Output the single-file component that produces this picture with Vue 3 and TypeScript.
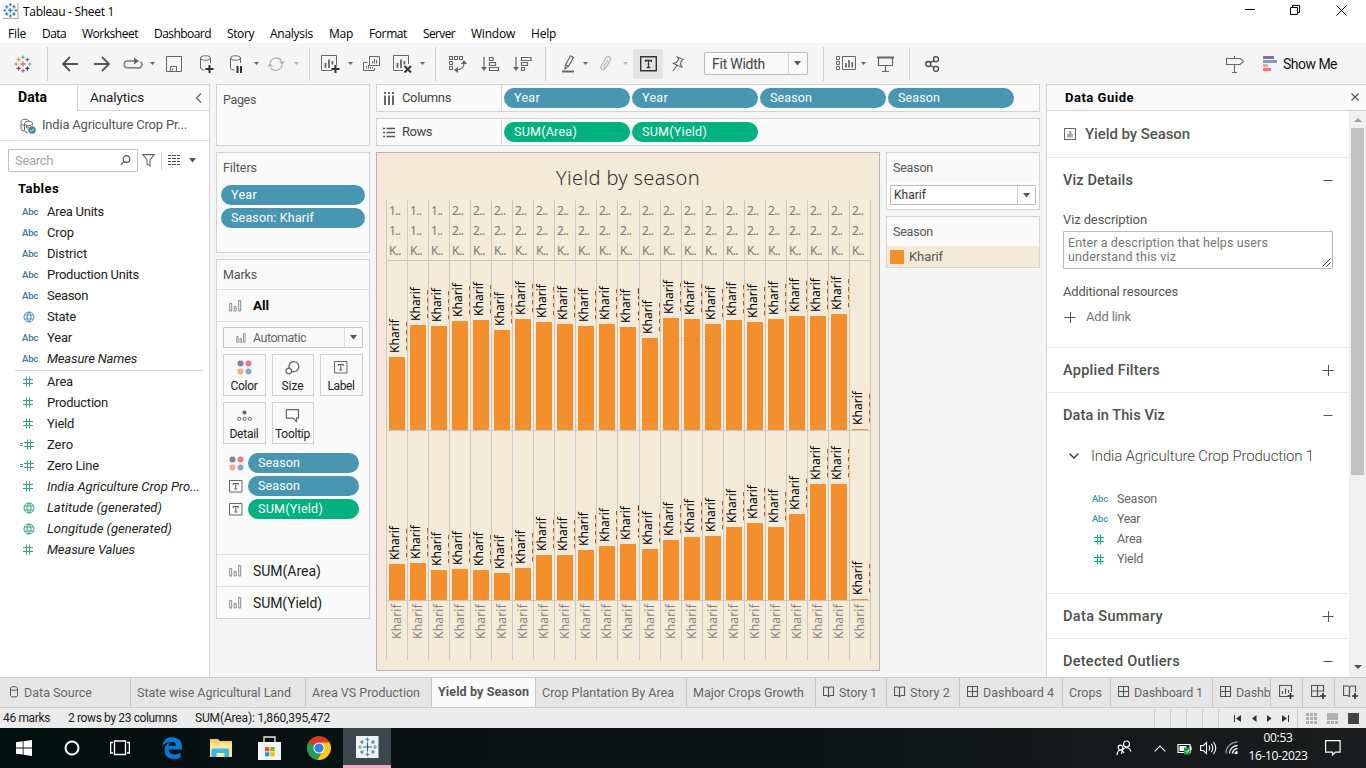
<script setup lang="ts">
import { h, type FunctionalComponent } from 'vue'

// Stretches or tightens a label's letter spacing so that it takes the given length.
const vFit = {
  mounted(el: HTMLElement, binding: { value: number }) {
    const range = document.createRange()
    range.selectNodeContents(el)
    const box = range.getBoundingClientRect()
    const length = Math.max(box.width, box.height)
    const count = (el.textContent || '').trim().length
    if (count) el.style.letterSpacing = ((binding.value - length) / count).toFixed(3) + 'px'
  },
}

interface Shape { d: string; f?: string; s?: string; w?: number; o?: number }
interface Glyph { w: number; h: number; c?: string; p: Shape[] }

const circle = (x: number, y: number, r: number) =>
  `M${x - r} ${y}a${r} ${r} 0 1 0 ${2 * r} 0a${r} ${r} 0 1 0 ${-2 * r} 0`
const plus = (x: number, y: number, r: number) => `M${x - r} ${y}h${2 * r}M${x} ${y - r}v${2 * r}`
const G = '#666'

const logo = (c: string[], k: number): Shape[] => [
  { d: plus(9 * k, 9 * k, 2.6 * k), s: c[0], w: 1.3 },
  { d: plus(9 * k, 2.2 * k, 1.8 * k), s: c[1], w: 1 },
  { d: plus(9 * k, 15.8 * k, 1.8 * k), s: c[2], w: 1 },
  { d: plus(2.2 * k, 9 * k, 1.6 * k), s: c[3], w: 1 },
  { d: plus(15.8 * k, 9 * k, 1.6 * k), s: c[4], w: 1 },
  { d: plus(4.6 * k, 4.6 * k, 2 * k), s: c[5], w: 1.2 },
  { d: plus(13.4 * k, 4.6 * k, 2 * k), s: c[6], w: 1.2 },
  { d: plus(4.6 * k, 13.4 * k, 2 * k), s: c[7], w: 1.2 },
  { d: plus(13.4 * k, 13.4 * k, 2 * k), s: c[8], w: 1.2 },
]
const blue = Array(9).fill('#3a7ca8')
const globe = (c: string): Glyph => ({
  w: 12, h: 12, p: [{ d: circle(6, 6, 5) + 'M1.500 4h9M1.500 8h9M6 1Q2 6 6 11Q10 6 6 1', s: c, w: 1 }],
})

const glyphs: Record<string, Glyph> = {
  logo: { w: 18, h: 18, p: logo(['#e8762c', '#7099a6', '#5c6692', '#7099a6', '#7099a6', '#eb912c', '#59879b', '#c72035', '#1f447e'], 1) },
  appLogo: { w: 16, h: 16, p: [{ d: 'M0 0h15.5v15.5h-15.5z', f: '#f7f7f7' }, { d: 'M15 0v15.5M0 15.5h15.5', s: '#aaa' }, ...logo(blue, 0.82)] },
  left: { w: 18, h: 16, p: [{ d: 'M2 8h15M9 1L2 8l7 7', s: '#555', w: 1.8 }] },
  right: { w: 18, h: 16, p: [{ d: 'M1 8h15M9 1l7 7l-7 7', s: '#555', w: 1.8 }] },
  redo: { w: 20, h: 14, p: [{ d: 'M11 4H4.500a3.400 3.400 0 0 0 0 6.800H14a3.500 3.500 0 0 0 3.500-6', s: '#777', w: 1.4 }, { d: 'M11 0.500l5 3.500l-5 3.500z', f: '#666' }] },
  caret: { w: 5, h: 3, p: [{ d: 'M0 0h5l-2.500 3z', f: '#666' }] },
  caretPale: { w: 5, h: 3, p: [{ d: 'M0 0h5l-2.500 3z', f: '#b5b5b5' }] },
  caretBig: { w: 8, h: 5, p: [{ d: 'M0 0h7l-3.500 4.500z', f: '#555' }] },
  save: { w: 16, h: 16, p: [{ d: 'M.5.5h15v15h-15zM4.500 15v-4.500h6V15M6.500 12.500v2', s: G }] },
  dbPlus: { w: 16, h: 18, p: [{ d: 'M1.500 3v10c0 1 2 2 4 2M11.500 3v5M1.500 3c0-3 10-3 10 0s-10 3-10 0', s: G }, { d: 'M10.500 10v8M6.500 14h8', s: '#333', w: 2 }] },
  dbPause: { w: 16, h: 18, p: [{ d: 'M1.500 3v10c0 1 2 2 4 2M11.500 3v5M1.500 3c0-3 10-3 10 0s-10 3-10 0', s: G }, { d: 'M8.500 11v7M12 11v7', s: '#333', w: 2 }] },
  refresh: { w: 18, h: 16, p: [{ d: 'M3 7a6.300 6.300 0 0 1 11.500-2M15 9a6.300 6.300 0 0 1-11.500 2.500', s: '#b5b5b5', w: 1.3 }, { d: 'M12 5.500h6l-3 3.500zM0 10.500h6l-3-3.500z', f: '#b5b5b5' }] },
  chartPlus: { w: 20, h: 18, p: [{ d: 'M11 15.500H.5V.5h15V10', s: G }, { d: 'M4.500 8v5M8 4.500v8.500M11.500 6v3.500', s: G, w: 1.8 }, { d: 'M14.500 10v8M10.500 14h8', s: '#333', w: 2 }] },
  chartX: { w: 20, h: 18, p: [{ d: 'M10 15.500H.5V.5h15V9', s: G }, { d: 'M4.500 8v5M8 4.500v8.500M11.500 6v3.500', s: G, w: 1.8 }, { d: 'M11.500 11l6.500 6.500M18 11l-6.500 6.500', s: '#333', w: 2 }] },
  dup: { w: 18, h: 16, p: [{ d: 'M6.500.5h10v9h-10zM4.500 6.500h-4v8h11V12M9.500 5v2.500M11.500 3v4.500M13.500 4v3.500M3.500 10v2.500M5.500 9v3.500M7.500 11v1.500M9.500 11v1.500', s: G }] },
  swap: { w: 18, h: 18, p: [{ d: 'M.5 1.500h3v3h-3zM5.500 1.500h3v3h-3zM10.500 1.500h3v3h-3zM.5 6.500h3v3h-3zM.5 11.500h3v3h-3zM15 8q0 6.500-7 7', s: G, w: 1.1 }, { d: 'M15 5l3 4h-6zM5 15l4-3v6z', f: G }] },
  sortAsc: { w: 19, h: 16, p: [{ d: 'M3 1v12M8.500 1.500h3.500v3h-3.500zM8.500 6.500h6v3h-6zM8.500 11.500h9v3h-9z', s: G, w: 1.2 }, { d: 'M0 11h6l-3 4z', f: G }] },
  sortDesc: { w: 19, h: 16, p: [{ d: 'M3 1v12M8.500 1.500h9.500v3h-9.500zM8.500 6.500h6v3h-6zM8.500 11.500h3v3h-3z', s: G, w: 1.2 }, { d: 'M0 11h6l-3 4z', f: G }] },
  pen: { w: 14, h: 18, p: [{ d: 'M8.500.8l3 1.600l-5 9l-3.500 2.600l.5-4.200zM3.500 9.800l3 1.600', s: G, w: 1.2 }, { d: 'M0 16.500h12', s: G, w: 2 }] },
  clip: { w: 14, h: 16, p: [{ d: 'M11 5L6.500 12.500q-1.500 2-3.500 1q-2-1.500-.8-3.500L7 2q1.500-2 3.500-1q1.800 1.200.8 3.300L7 11.500q-1 1.200-1.800.6t-.2-1.800L9 4', s: '#b5b5b5', w: 1.2 }] },
  text: { w: 17, h: 16, p: [{ d: 'M.7.7h15.600v14.100H.7z', s: '#333', w: 1.4 }, { d: 'M5.500 6V4.500h6V6M8.500 4.500v7M6.800 11.500h3.400', s: '#333', w: 1.3 }] },
  textSm: { w: 14, h: 13, p: [{ d: 'M.5.5h12.500v11.500H.5z', s: G }, { d: 'M4.300 5V3.500h5V5M6.800 3.500v5.500M5.300 9h3', s: G, w: 1.1 }] },
  pin: { w: 14, h: 16, p: [{ d: 'M6.500 1l5.500 2.500l-1.500.9l-1 3.500l1.500 3.300L2.500 7.500l3-1.200l2.200-3.200zM6 9.500L2 15', s: G, w: 1.2 }] },
  cards: { w: 20, h: 16, p: [{ d: 'M.5.5h3v3h-3zM.5 5.500h3v3h-3zM.5 10.500h3v3h-3zM6.500.5h13v13h-13z', s: G }, { d: 'M10 7v4.500M13 4v7.500M16.300 6v5.500', s: G, w: 1.7 }] },
  present: { w: 18, h: 16, p: [{ d: 'M0 1.500h17', s: G, w: 2 }, { d: 'M1.500 2v7.500h14V2M8.500 10v5M5 15.500h7', s: G, w: 1.2 }] },
  share: { w: 15, h: 16, p: [{ d: circle(3.2, 8, 2.5) + circle(11, 3.2, 2.5) + circle(11, 12.8, 2.5) + 'M5.400 6.700L8.800 4.600M5.400 9.300l3.400 2.100', s: '#444', w: 1.3 }] },
  sign: { w: 19, h: 18, p: [{ d: 'M.5 3.500h13.500l3.500 3l-3.500 3H.5zM8.500 1v2.500M8.500 10v7M6 17.500h5', s: G, w: 1.1 }] },
  showMe: { w: 15, h: 15, p: [{ d: 'M0 0h11v3H0z', f: '#8a6d9b' }, { d: 'M0 4h14v3H0z', f: '#7ba0cc' }, { d: 'M0 8h5v3H0z', f: '#f5a97f' }, { d: 'M0 12h8v3H0z', f: '#fb6f7f' }] },
  source: { w: 17, h: 16, p: [{ d: 'M1 3.500v7q0 2 3 2.500M1 3.500c0-3 8-3 8 0M4.500 5.500c0-3 8-3 8 0s-8 2.500-8 0v7q0 1.500 3 2M12.500 5.500v2M1.500 6.500l3 1M9 9H6l1.500-1.500M6 9l1.500 1.500', s: G, w: 1 }, { d: circle(12, 12, 3.7), f: '#3a87a5' }, { d: 'M10.200 12l1.300 1.300l2.300-2.500', s: '#fff', w: 1 }] },
  search: { w: 11, h: 11, p: [{ d: circle(6.5, 4, 3.3) + 'M4.200 6.400L.8 9.800', s: '#555', w: 1.2 }] },
  funnel: { w: 14, h: 13, p: [{ d: 'M.8.6h11.400L8 6v6L5 10V6z', s: G, w: 1.1 }] },
  grid: { w: 13, h: 11, p: [{ d: 'M0 .5h12M0 3.500h12M0 6.500h12M0 9.500h12', s: '#444', w: 1 }, { d: 'M3.500 0v11M8.500 0v11', s: '#fff', w: .8 }] },
  chevL: { w: 7, h: 10, p: [{ d: 'M6 .5L1.500 5L6 9.500', s: G, w: 1.3 }] },
  chevD: { w: 10, h: 6, p: [{ d: 'M.5.5L5 5L9.500.5', s: '#333', w: 1.3 }] },
  colIcon: { w: 12, h: 13, p: [{ d: 'M2 0v2M6 0v2M10 0v2M2 3.500v9.500M6 3.500v9.500M10 3.500v9.500', s: G, w: 2 }] },
  rowIcon: { w: 12, h: 11, p: [{ d: 'M0 1.500h2M0 5.500h2M0 9.500h2M3.500 1.500h8.500M3.500 5.500h8.500M3.500 9.500h8.500', s: '#555', w: 1.5 }] },
  hash: { w: 11, h: 11, p: [{ d: 'M0 3.500h10M0 7.500h10M3.500.5v10M6.500.5v10', s: '#3aa183', w: 1 }] },
  hashVivid: { w: 11, h: 11, p: [{ d: 'M0 3.500h10M0 7.500h10M3.500.5v10M6.500.5v10', s: '#00b180', w: 1.2 }] },
  eqHash: { w: 14, h: 11, p: [{ d: 'M4 3.500h10M4 7.500h10M7.500.5v10M10.500.5v10M0 4.500h3M0 6.500h3', s: '#3aa183', w: 1 }] },
  globe: globe('#4996b2'),
  globeGreen: globe('#3aa183'),
  bars: { w: 13, h: 12, p: [{ d: 'M.7 3.500h2v7.500h-2zM5.200 6.500h2v4.500h-2zM9.700.5h2v10.500h-2z', s: '#8a8a8a', w: 1 }] },
  barsSm: { w: 10, h: 10, p: [{ d: 'M.7 3.500h1.500v6h-1.500zM4 5.500h1.500v4h-1.500zM7.500.5h1.500v9h-1.500z', s: '#999', w: 1 }] },
  dots: { w: 15, h: 15, p: [{ d: circle(3.5, 3.5, 3), f: '#8a7a9e' }, { d: circle(11.5, 3.5, 3), f: '#fb7480' }, { d: circle(3.5, 11.5, 3), f: '#f4ab80' }, { d: circle(11.5, 11.5, 3), f: '#86a7d0' }] },
  size: { w: 15, h: 15, p: [{ d: 'M4.200 8.500A5 5 0 1 1 7 11.300', s: G, w: 1.3 }, { d: circle(3.8, 11, 2.9), s: G, w: 1.3 }] },
  detail: { w: 15, h: 12, p: [{ d: circle(7.5, 2.5, 2.1), f: G }, { d: circle(2.2, 8.8, 1.6) + circle(7.5, 8.8, 1.6) + circle(12.8, 8.8, 1.6), s: G, w: 1 }] },
  bubble: { w: 15, h: 14, p: [{ d: 'M1.500.6h12v8.500h-2v3.300L8 9.100H1.500q-.5-4 0-8.500', s: G, w: 1.2 }] },
  vizBox: { w: 12, h: 12, p: [{ d: 'M.5.5h11v11H.5z', s: G, w: 1.1 }, { d: 'M3 6h2V3h2.500v3H9v3.500H3z', f: '#aaa' }] },
  minus: { w: 12, h: 12, p: [{ d: 'M1.500 6.500h9', s: '#555', w: 1 }] },
  plus: { w: 12, h: 12, p: [{ d: 'M.5 6.500h11M6.500 1v11', s: '#555', w: 1 }] },
  close: { w: 8, h: 8, p: [{ d: 'M.5.5l7 7M7.500.5l-7 7', s: '#555', w: 1.2 }] },
  grip: { w: 9, h: 9, p: [{ d: 'M.5 8.500l8-8M4.500 8.500l4-4', s: '#444', w: 1 }] },
  cyl: { w: 10, h: 12, p: [{ d: 'M1.500 2.500v7q0 1.500 3.500 1.500t3.500-1.500v-7c0-2.500-7-2.500-7 0s7 2.300 7 0', s: '#555', w: 1 }] },
  book: { w: 12, h: 12, p: [{ d: 'M.5 1h3q2 0 2 1.500V11q-.5-1.500-2-1.500H.5zM10.500 1h-3q-2 0-2 1.500V11q.5-1.500 2-1.500h3z', s: '#555', w: 1.1 }] },
  dash: { w: 12, h: 12, p: [{ d: 'M.5.5h10v10H.5zM5.500.5v10M.5 5.500h10', s: '#555', w: 1.1 }] },
  newSheet: { w: 16, h: 15, p: [{ d: 'M9 11.500H.5V.5h12V7M3.500 6v3M6.500 3.500v5.500M9.500 5v3', s: '#555', w: 1.2 }, { d: 'M11.500 8v6M8.500 11h6', s: '#333', w: 1.6 }] },
  newDash: { w: 16, h: 15, p: [{ d: 'M9 11.500H.5V.5h12V7M6.500.5v11M.5 6h12', s: '#555', w: 1.2 }, { d: 'M12 8v6M9 11h6', s: '#333', w: 1.6 }] },
  newStory: { w: 16, h: 15, p: [{ d: 'M.5 1h4q2 0 2 1.500V12q-.5-1.500-2-1.500h-4zM12.500 7V1h-4q-2 0-2 1.500V12', s: '#555', w: 1.2 }, { d: 'M12 8v6M9 11h6', s: '#333', w: 1.6 }] },
  first: { w: 8, h: 7, p: [{ d: 'M.5 0v7', s: '#333', w: 1 }, { d: 'M7 0v7L2 3.500z', f: '#333' }] },
  prev: { w: 5, h: 7, p: [{ d: 'M4.500 0v7L0 3.500z', f: '#333' }] },
  next: { w: 5, h: 7, p: [{ d: 'M0 0v7l4.500-3.500z', f: '#333' }] },
  last: { w: 8, h: 7, p: [{ d: 'M6.500 0v7', s: '#333', w: 1 }, { d: 'M0 0v7l5-3.500z', f: '#333' }] },
  sheetGrid: { w: 12, h: 11, p: [{ d: 'M0 0h3v3H0zM4 0h3v3H4zM8 0h3v3H8zM0 4h3v3H0zM4 4h3v3H4zM8 4h3v3H8zM0 8h3v3H0zM4 8h3v3H4zM8 8h3v3H8z', f: '#b0b0b0' }] },
  film: { w: 12, h: 11, p: [{ d: 'M0 0h11v7H0zM0 8h3v3H0zM4 8h3v3H4zM8 8h3v3H8z', f: '#b0b0b0' }] },
  tabsView: { w: 12, h: 11, p: [{ d: 'M0 0h11v11H0z', f: '#444' }] },
  min: { w: 11, h: 11, p: [{ d: 'M0 5.500h10', s: '#000', w: 1 }] },
  restore: { w: 11, h: 11, p: [{ d: 'M.5 2.500h7v7h-7zM2.500 2.500v-2h7v7h-2', s: '#000', w: 1 }] },
  quit: { w: 11, h: 11, p: [{ d: 'M.5.5l10 10M10.500.5l-10 10', s: '#000', w: 1 }] },
  win: { w: 16, h: 16, p: [{ d: 'M0 2.300l6.700-1v6.200H0zM7.500 1.200L16 0v7.500H7.500zM0 8.400h6.700v6.200L0 13.700zM7.500 8.400H16V16l-8.500-1.200z', f: '#fff' }] },
  cortana: { w: 16, h: 16, p: [{ d: circle(8, 8, 6.5), s: '#fff', w: 2 }] },
  taskView: { w: 20, h: 16, p: [{ d: 'M4.500 1h11v13.500h-11zM3 2.500H.6v10.500H3M17 2.500h2.400v10.500H17', s: '#fff', w: 1.3 }] },
  edge: { w: 20, h: 22, p: [{ d: 'M0 9.500Q1.500 0 10.500 0Q20 .8 20 10v2.500H6.500q.5 5 6.500 5q3 0 5.500-1.700v4.700Q15.500 22 11.500 22Q2.500 21.500 2.500 13q.2-5.500 5.500-8Q2.500 5.500 0 9.500M6.700 8.700h7q0-4-3.300-4T6.700 8.700', f: '#0078d7' }] },
  folder: { w: 22, h: 19, p: [{ d: 'M0 0h8l2 2h12v16H0z', f: '#f5cf5f' }, { d: 'M0 4h22v14H0z', f: '#fde596' }, { d: 'M1.500 18V11q0-1.500 1.500-1.500h14.500q1.500 0 1.500 1.500v7h-4.500v-4h-8v4z', f: '#38b6ea' }] },
  store: { w: 24, h: 24, p: [{ d: 'M6 7V1h11v6', s: '#e8e8e8', w: 1.4 }, { d: 'M0 6h23v18H0z', f: '#f3f3f3' }, { d: 'M7 11h4.300v4.300H7z', f: '#f25022' }, { d: 'M12.300 11h4.300v4.300h-4.300z', f: '#7fba00' }, { d: 'M7 16.300h4.300v4H7z', f: '#00a4ef' }, { d: 'M12.300 16.300h4.300v4h-4.300z', f: '#ffb900' }] },
  chrome: { w: 24, h: 24, p: [{ d: circle(12, 12, 12), f: '#de3a2b' }, { d: 'M1.500 6.200A12 12 0 0 0 10.500 23.900L15.500 15.500L12 12z', f: '#1da05a' }, { d: 'M22.600 6.600A12 12 0 0 1 10.500 23.900L17.400 12L14 6.600z', f: '#fbcb1b' }, { d: circle(12, 12, 5.6), f: '#fff' }, { d: circle(12, 12, 4.6), f: '#3b7ded' }] },
  taskLogo: { w: 23, h: 22, p: [{ d: 'M0 0h22.500v22H0z', f: '#eef3f6' }, ...[['M11.500 6.500v9M7 11h9', '#24668f'], [plus(11.5, 3.5, 2), '#4a86a8'], [plus(11.5, 18.5, 2), '#4a86a8'], [plus(4, 11, 2), '#6c9bb8'], [plus(19, 11, 2), '#6c9bb8'], [plus(6, 6, 2), '#4a86a8'], [plus(17, 6, 2), '#4a86a8'], [plus(6, 16, 2), '#4a86a8'], [plus(17, 16, 2), '#4a86a8']].map(([d, s]) => ({ d, s, w: 1.2 }))] },
  people: { w: 16, h: 16, p: [{ d: circle(10.5, 4, 3) + 'M5.500 14q.5-6 5-6.500q3.500.5 4.500 4' + circle(4.5, 7.5, 2.3) + 'M1 15q.3-4.500 3.500-5q2.500.3 3.500 3', s: '#fff', w: 1.2 }] },
  up: { w: 12, h: 7, p: [{ d: 'M.7 6.300L6 1l5.300 5.300', s: '#fff', w: 1.2 }] },
  battery: { w: 16, h: 14, p: [{ d: 'M1 3.500h12v8H1zM14 5.500v4', s: '#fff', w: 1.2 }, { d: 'M2.500 5h7v5h-7z', f: '#fff' }, { d: 'M7 6.500h6v7H7z', f: '#1e9a43' }, { d: 'M8.500 10l1.500 1.500l2.500-3', s: '#fff' }] },
  sound: { w: 17, h: 14, p: [{ d: 'M.6 4.600h2.600L6.500 1.500v11L3.200 9.500H.6zM9 4.500q1.500 2.500 0 5M11.300 2.700q3 4.300 0 8.600M13.500 1q4.500 6 0 12', s: '#fff', w: 1.1 }] },
  wifi: { w: 14, h: 14, p: [{ d: 'M4.500 12.500A8 8 0 0 1 12.500 4.500M7.500 12.500a5 5 0 0 1 5-5', s: '#fff', w: 1.3 }, { d: 'M1 12.500A11.500 11.500 0 0 1 12.500 1', s: '#999', w: 1.3 }, { d: 'M12.500 10v3h-3a3 3 0 0 1 3-3', f: '#fff' }] },
  notice: { w: 16, h: 16, p: [{ d: 'M.6.600h14.500v11.500H10.500L7.500 15v-2.900H.6z', s: '#fff', w: 1.2 }] },
}

const Icon: FunctionalComponent<{ name: string }> = (props) => {
  const g = glyphs[props.name]
  return h('svg', { width: g.w, height: g.h, viewBox: `0 0 ${g.w} ${g.h}`, fill: 'none' },
    g.p.map((s) => h('path', { d: s.d, fill: s.f || 'none', stroke: s.s || 'none', 'stroke-width': s.w || 1, 'fill-rule': 'evenodd' })))
}
Icon.props = ['name']

const menus: [string, number][] = [['File', 18], ['Data', 24], ['Worksheet', 56], ['Dashboard', 57], ['Story', 27], ['Analysis', 43], ['Map', 24], ['Format', 38], ['Server', 32], ['Window', 44], ['Help', 25]]

// Toolbar entries: icon name (or "|" for a divider) and the gap before it.
const toolsA: [string, number][] = [['logo', 14], ['|', 15], ['left', 13], ['right', 14], ['redo', 12], ['caret', 7], ['save', 11], ['dbPlus', 17], ['dbPause', 14], ['caret', 9], ['refresh', 8], ['caretPale', 9], ['|', 10], ['chartPlus', 11], ['caret', 7], ['dup', 10], ['chartX', 12], ['caret', 7], ['|', 10], ['swap', 13], ['sortAsc', 14], ['sortDesc', 13], ['|', 13], ['pen', 16], ['caret', 7], ['clip', 11], ['caretPale', 10]]
const toolsB: [string, number][] = [['|', 15], ['cards', 12], ['caret', 5], ['present', 11], ['|', 14], ['share', 15]]

const dims: [string, string, number, boolean][] = [['Abc', 'Area Units', 57, false], ['Abc', 'Crop', 27, false], ['Abc', 'District', 40, false], ['Abc', 'Production Units', 92, false], ['Abc', 'Season', 41, false], ['globe', 'State', 29, false], ['Abc', 'Year', 25, false], ['Abc', 'Measure Names', 90, true]]
const meas: [string, string, number, boolean][] = [['hash', 'Area', 26, false], ['hash', 'Production', 61, false], ['hash', 'Yield', 27, false], ['eqHash', 'Zero', 26, false], ['eqHash', 'Zero Line', 52, false], ['hash', 'India Agriculture Crop Pro...', 153, true], ['globeGreen', 'Latitude (generated)', 115, true], ['globeGreen', 'Longitude (generated)', 125, true], ['hash', 'Measure Values', 88, true]]

const areaBars = [73, 105, 104, 109, 110, 100, 111, 108, 106, 104, 106, 103, 92, 112, 111, 106, 110, 108, 111, 114, 114, 116, 1]
const yieldBars = [36, 37, 30, 31, 30, 27, 32, 45, 45, 50, 54, 56, 51, 60, 63, 64, 73, 77, 73, 86, 116, 116, 1]

const sheets: { t: string; w: number; f: number; i?: string; on?: boolean }[] = [
  { t: 'Data Source', w: 131, f: 68, i: 'cyl' }, { t: 'State wise Agricultural Land', w: 175, f: 154 }, { t: 'Area VS Production', w: 126, f: 108 },
  { t: 'Yield by Season', w: 104, f: 91, on: true }, { t: 'Crop Plantation By Area', w: 151, f: 132 }, { t: 'Major Crops Growth', w: 129, f: 111 },
  { t: 'Story 1', w: 71, f: 38, i: 'book' }, { t: 'Story 2', w: 73, f: 40, i: 'book' }, { t: 'Dashboard 4', w: 103, f: 71, i: 'dash' },
  { t: 'Crops', w: 48, f: 33 }, { t: 'Dashboard 1', w: 102, f: 69, i: 'dash' }, { t: 'Dashboard 2', w: 100, f: 69, i: 'dash' },
]
</script>

<template>
  <div class="app">
    <header class="title"><Icon name="appLogo" /><span v-fit="91">Tableau - Sheet 1</span>
      <div class="winbtns"><Icon name="min" /><Icon name="restore" /><Icon name="quit" /></div>
    </header>
    <nav class="menu"><span v-for="m in menus" :key="m[0]" v-fit="m[1]">{{ m[0] }}</span></nav>

    <div class="toolbar">
      <template v-for="(t, i) in toolsA" :key="i">
        <i v-if="t[0] === '|'" class="div" :style="{ marginLeft: t[1] + 'px' }"></i>
        <Icon v-else :name="t[0]" :style="{ marginLeft: t[1] + 'px' }" />
      </template>
      <div class="tbtn"><Icon name="text" /></div>
      <Icon name="pin" />
      <div class="fitbox"><span v-fit="53">Fit Width</span><b><Icon name="caretBig" /></b></div>
      <template v-for="(t, i) in toolsB" :key="i">
        <i v-if="t[0] === '|'" class="div" :style="{ marginLeft: t[1] + 'px' }"></i>
        <Icon v-else :name="t[0]" :style="{ marginLeft: t[1] + 'px' }" />
      </template>
      <div class="showme"><Icon name="sign" /><Icon name="showMe" /><span v-fit="54">Show Me</span></div>
    </div>

    <main class="work">
      <aside class="data">
        <div class="dtabs"><div class="dt on"><span v-fit="29">Data</span></div><div class="dt off"><span v-fit="54">Analytics</span><Icon name="chevL" /></div></div>
        <div class="src"><Icon name="source" /><span v-fit="145">India Agriculture Crop Pr...</span></div>
        <div class="find"><div class="search"><span v-fit="38">Search</span><Icon name="search" /></div><Icon name="funnel" /><i></i><Icon name="grid" /><Icon name="caretBig" /></div>
        <h4><span v-fit="41">Tables</span></h4>
        <div v-for="r in dims" :key="r[1]" class="fld"><b class="abc"><span v-if="r[0] === 'Abc'" v-fit="16">Abc</span><Icon v-else :name="r[0]" /></b><span v-fit="r[2]" :class="{ it: r[3] }">{{ r[1] }}</span></div>
        <hr />
        <div v-for="r in meas" :key="r[1]" class="fld"><b class="abc" :class="{ eq: r[0] === 'eqHash' }"><Icon :name="r[0]" /></b><span v-fit="r[2]" :class="{ it: r[3] }">{{ r[1] }}</span></div>
      </aside>

      <section class="cards">
        <div class="card pages"><h5><span v-fit="33">Pages</span></h5></div>
        <div class="card filters"><h5><span v-fit="34">Filters</span></h5>
          <div class="pill"><span v-fit="26">Year</span></div><div class="pill"><span v-fit="83">Season: Kharif</span></div></div>
        <div class="card marks"><h5><span v-fit="34">Marks</span></h5>
          <div class="mrow all"><Icon name="bars" /><span v-fit="16">All</span></div>
          <div class="auto"><Icon name="barsSm" /><span v-fit="53">Automatic</span><b><Icon name="caretBig" /></b></div>
          <div class="mgrid">
            <div class="mb"><Icon name="dots" /><span v-fit="27">Color</span></div>
            <div class="mb"><Icon name="size" /><span v-fit="22">Size</span></div>
            <div class="mb"><Icon name="textSm" /><span v-fit="27">Label</span></div>
            <div class="mb"><Icon name="detail" /><span v-fit="29">Detail</span></div>
            <div class="mb"><Icon name="bubble" /><span v-fit="35">Tooltip</span></div>
          </div>
          <div class="mp"><Icon name="dots" /><div class="pill"><span v-fit="42">Season</span></div></div>
          <div class="mp"><Icon name="textSm" /><div class="pill"><span v-fit="42">Season</span></div></div>
          <div class="mp"><Icon name="textSm" /><div class="pill green"><span v-fit="65">SUM(Yield)</span></div></div>
          <div class="mrow sum first"><Icon name="bars" /><span v-fit="68">SUM(Area)</span></div>
          <div class="mrow sum"><Icon name="bars" /><span v-fit="69">SUM(Yield)</span></div>
        </div>
      </section>

      <section class="center">
        <div class="shelf"><div class="sl"><Icon name="colIcon" /><span v-fit="49">Columns</span></div>
          <div class="pill"><span v-fit="26">Year</span></div><div class="pill"><span v-fit="26">Year</span></div><div class="pill"><span v-fit="42">Season</span></div><div class="pill"><span v-fit="42">Season</span></div></div>
        <div class="shelf"><div class="sl"><Icon name="rowIcon" /><span v-fit="30">Rows</span></div>
          <div class="pill green"><span v-fit="63">SUM(Area)</span></div><div class="pill green"><span v-fit="65">SUM(Yield)</span></div></div>
        <div class="lower">
          <div class="viz">
            <h2><span v-fit="144">Yield by season</span></h2>
            <div class="plot">
              <div v-for="(a, i) in areaBars" :key="i" class="col" :class="{ wide: i === 11 }">
                <div class="hd"><span v-fit="15">{{ i < 3 ? '1..' : '2..' }}</span><span v-fit="15">{{ i < 3 ? '1..' : '2..' }}</span><span v-fit="15">K..</span></div>
                <div class="pane"><div class="lbl"><span v-fit="34">Kharif</span><s v-if="i !== 11"></s><u v-else>13,897</u></div><div class="bar" :style="{ height: a + 'px' }"></div></div>
                <div class="pane"><div class="lbl"><span v-fit="34">Kharif</span><s v-if="i !== 11"></s><u v-else>13,897</u></div><div class="bar" :style="{ height: yieldBars[i] + 'px' }"></div></div>
                <div class="ft"><span v-fit="35">Kharif</span></div>
              </div>
              <span class="ghost">Full-screen Snip</span>
            </div>
          </div>
          <div class="legends">
            <div class="lg one"><h5><span v-fit="40">Season</span></h5><div class="sel"><span v-fit="32">Kharif</span><b><Icon name="caretBig" /></b></div></div>
            <div class="lg two"><h5><span v-fit="40">Season</span></h5><div class="key"><i></i><span v-fit="34">Kharif</span></div></div>
          </div>
        </div>
      </section>

      <aside class="guide">
        <div class="gh"><span v-fit="69">Data Guide</span><Icon name="close" /></div>
        <div class="gwrap">
          <div class="gbody">
            <div class="g1"><Icon name="vizBox" /><span v-fit="105">Yield by Season</span></div>
            <div class="gs"><span v-fit="70">Viz Details</span><Icon name="minus" /></div>
            <div class="gdet">
              <label><span v-fit="84">Viz description</span></label>
              <div class="ta"><span v-fit="200">Enter a description that helps users</span><br /><span v-fit="108">understand this viz</span><Icon name="grip" /></div>
              <label><span v-fit="115">Additional resources</span></label>
              <div class="add"><Icon name="plus" /><span v-fit="45">Add link</span></div>
            </div>
            <div class="gs line"><span v-fit="97">Applied Filters</span><Icon name="plus" /></div>
            <div class="gs line"><span v-fit="102">Data in This Viz</span><Icon name="minus" /></div>
            <div class="gdata">
              <div class="ds"><Icon name="chevD" /><span v-fit="223">India Agriculture Crop Production 1</span></div>
              <div class="gf"><b><span v-fit="16">Abc</span></b><span v-fit="40">Season</span></div>
              <div class="gf"><b><span v-fit="16">Abc</span></b><span v-fit="23">Year</span></div>
              <div class="gf"><b><Icon name="hashVivid" /></b><span v-fit="25">Area</span></div>
              <div class="gf"><b><Icon name="hashVivid" /></b><span v-fit="26">Yield</span></div>
            </div>
            <div class="gs line"><span v-fit="100">Data Summary</span><Icon name="plus" /></div>
            <div class="gs line"><span v-fit="117">Detected Outliers</span><Icon name="minus" /></div>
          </div>
          <div class="sb"><i class="up"></i><div class="thumb"></div><i class="dn"></i></div>
        </div>
      </aside>
    </main>

    <div class="sheets">
      <div class="slist">
        <div v-for="s in sheets" :key="s.t" class="sh" :class="{ on: s.on, ic: !!s.i }" :style="{ width: s.w + 'px' }"><Icon v-if="s.i" :name="s.i" /><span v-fit="s.f">{{ s.t }}</span></div>
      </div>
      <div class="nb"><Icon name="newSheet" /></div><div class="nb"><Icon name="newDash" /></div><div class="nb"><Icon name="newStory" /></div>
    </div>
    <div class="status"><span v-fit="47">46 marks</span><span v-fit="109">2 rows by 23 columns</span><span v-fit="135">SUM(Area): 1,860,395,472</span>
      <div class="snav"><i></i><i></i><i></i><i></i><i></i><Icon name="first" /><Icon name="prev" /><Icon name="next" /><Icon name="last" /><em></em><Icon name="sheetGrid" /><Icon name="film" /><Icon name="tabsView" /></div>
    </div>
    <footer class="task">
      <div class="tk"><Icon name="win" /></div><div class="tk"><Icon name="cortana" /></div><div class="tk view"><Icon name="taskView" /></div>
      <div class="tk tw"><Icon name="edge" /></div><div class="tk tw"><Icon name="folder" /></div><div class="tk tw"><Icon name="store" /></div><div class="tk tw"><Icon name="chrome" /></div><div class="tk act"><Icon name="taskLogo" /></div>
      <div class="tray"><Icon name="people" /><Icon name="up" /><Icon name="battery" /><Icon name="sound" /><Icon name="wifi" />
        <div class="clock"><span v-fit="29">00:53</span><span v-fit="59">16-10-2023</span></div><Icon name="notice" /></div>
    </footer>
  </div>
</template>

<style>
body { margin: 0; overflow: hidden; }
</style>
<style scoped>
* { box-sizing: border-box; }
.app { width: 1366px; height: 768px; display: flex; flex-direction: column; overflow: hidden; background: #f5f5f5; font: 13px/20px Roboto, "Open Sans", sans-serif; color: #333; white-space: nowrap; }
svg { display: block; flex: none; }
h2, h4, h5 { margin: 0; font-weight: 400; }
.title { height: 23px; background: #fff; display: flex; align-items: center; padding-left: 3px; font: 12px/23px "Open Sans", sans-serif; color: #000; flex: none; }
.title > span { margin-left: 4px; }
.title svg:first-child { margin-top: -1px; }
.winbtns { margin-left: auto; display: flex; gap: 34px; padding-right: 19px; margin-top: -3px; }
.winbtns svg:nth-child(2) { margin-right: 1px; }
.menu { height: 20px; background: #fff; display: flex; gap: 16px; padding-left: 8px; font: 12px/21px "Open Sans", sans-serif; color: #000; flex: none; }
.toolbar { height: 41px; flex: none; display: flex; align-items: center; }
.div { width: 1px; height: 34px; background: #d0d0d0; flex: none; }
.tbtn { width: 30px; height: 30px; background: #e4e4e4; display: flex; align-items: center; justify-content: center; margin: 0 8px 0 5px; flex: none; }
.fitbox { width: 104px; height: 23px; border: 1px solid #bbb; border-radius: 2px; background: #f9f9f9; display: flex; align-items: center; margin-left: 19px; padding-left: 7px; font-size: 14px; color: #444; flex: none; }
.fitbox b { margin-left: auto; width: 19px; height: 21px; border-left: 1px solid #d4d4d4; display: flex; align-items: center; padding-left: 5px; }
.showme { margin-left: auto; display: flex; align-items: center; padding-right: 29px; color: #111; font-size: 14px; }
.showme svg + svg { margin: 0 5px 0 18px; }
.work { height: 593px; flex: none; display: flex; overflow: hidden; }
.data { width: 210px; background: #fff; border: solid #d4d4d4; border-width: 1px 1px 0 0; flex: none; }
.dtabs { display: flex; height: 26px; font-size: 14px; line-height: 25px; }
.dt.on { width: 77px; padding-left: 18px; color: #000; font-weight: 700; }
.dt.off { flex: 1; border: solid #d4d4d4; border-width: 0 0 1px 1px; background: #fafafa; padding: 0 7px 0 12px; display: flex; justify-content: space-between; align-items: center; color: #222; font-size: 13.500px; }
.src { height: 30px; border-bottom: 1px solid #e4e4e4; display: flex; align-items: center; padding-left: 20px; gap: 5px; color: #555; }
.src span { margin-top: -2px; }
.find { display: flex; align-items: center; padding: 8px 0 0 8px; height: 31px; }
.search { width: 130px; height: 23px; border: 1px solid #c0c0c0; border-radius: 1px; display: flex; align-items: center; justify-content: space-between; padding: 0 6px; color: #a5a5a5; }
.find > svg:nth-of-type(1) { margin-left: 4px; }
.find > i { width: 1px; height: 18px; background: #ccc; margin: 0 6px 0 5px; }
.find > svg:last-child { margin-left: 8px; }
h4 { font-weight: 700; color: #000; height: 29px; line-height: 34px; padding-left: 18px; }
.fld { height: 21px; line-height: 22px; display: flex; align-items: center; color: #222; }
.abc { width: 47px; padding-left: 22px; font-size: 9.500px; font-weight: 600; color: #3f7f9b; flex: none; }
.abc svg { margin-left: 1px; }
.abc.eq { padding-left: 19px; }
.it { font-style: italic; }
hr { margin: 1px 6px 0 15px; border: 0; border-top: 1px solid #d4d4d4; }
.cards { width: 154px; margin-left: 6px; flex: none; }
.card { border: 1px solid #d4d4d4; background: #fafafa; margin-bottom: 6px; }
.card h5, .lg h5 { height: 29px; line-height: 29px; padding-left: 6px; color: #555; font-size: 12.500px; }
.pages { height: 62px; }
.filters { height: 101px; }
.pill { height: 20px; border-radius: 10px; background: #4996b2; color: #fff; line-height: 20px; padding-left: 10px; font-size: 12.500px; flex: none; }
.pill.green { background: #00b180; }
.filters .pill { margin: 3px 4px 0; }
.marks { height: 360px; }
.mrow { border: solid #ddd; border-width: 1px 0; height: 32px; display: flex; align-items: center; padding-left: 12px; gap: 11px; color: #222; font-size: 14px; }
.mrow.all { height: 33px; font-weight: 700; color: #000; font-size: 13.500px; }
.mrow.all span { margin-top: -2px; }
.mrow.sum { border-bottom: 0; }
.mrow.first { margin-top: 35px; }
.auto { margin: 5px 6px 0; height: 21px; border: 1px solid #c4c4c4; border-radius: 1px; display: flex; align-items: center; padding-left: 12px; gap: 7px; color: #666; font-size: 12.500px; }
.auto b { margin-left: auto; border-left: 1px solid #ddd; height: 19px; width: 18px; display: flex; align-items: center; padding-left: 5px; }
.mgrid { display: grid; grid-template-columns: 43px 42px 43px; gap: 6px; margin: 6px 6px 9px; }
.mb { height: 42px; border: 1px solid #d0d0d0; display: flex; flex-direction: column; align-items: center; justify-content: flex-end; font-size: 12px; line-height: 17px; color: #222; padding-right: 1px; }
.mb svg { margin-bottom: 3px; }
.mb:nth-child(3) svg { margin-bottom: 4px; }
.mb:nth-child(4) svg { margin-bottom: 4px; }
.mp { display: flex; align-items: center; margin: 3px 10px 0 12px; height: 20px; }
.mp .pill { margin-left: auto; width: 111px; }
.center { width: 664px; margin-left: 6px; flex: none; }
.shelf { height: 28px; border: 1px solid #d4d4d4; background: #fafafa; display: flex; align-items: center; gap: 2px; margin-bottom: 6px; }
.sl { width: 125px; height: 26px; border-right: 1px solid #d4d4d4; display: flex; align-items: center; padding-left: 6px; gap: 7px; color: #444; }
.shelf .pill { width: 126px; }
.lower { display: flex; gap: 6px; }
.viz { width: 504px; height: 519px; border: 1px solid #b4b4b4; background: #f5e9d8; padding-left: 9px; }
.viz h2 { height: 47px; text-align: center; font: 300 20px/50px "Noto Sans", "Open Sans", sans-serif; color: #333; padding-right: 9px; }
.plot { display: flex; position: relative; width: 485px; height: 460px; border-right: 1px solid #c8c8c8; }
.col { width: 21px; border-left: 1px solid #c8c8c8; overflow: hidden; flex: none; font-family: "Noto Sans", sans-serif; }
.col.wide { width: 22px; }
.hd { height: 61px; border-bottom: 1px solid #c8c8c8; padding: 1px 0 0 2px; font-size: 12px; line-height: 20px; color: #7d7a76; display: flex; flex-direction: column; align-items: flex-start; }
.pane { height: 170px; border-bottom: 1px solid #c8c8c8; display: flex; flex-direction: column; justify-content: flex-end; }
.bar { width: 16px; margin-left: 2px; background: #f48f2d; }
.lbl { position: relative; height: 38px; color: #000; font-size: 12px; line-height: 16px; }
.lbl span { position: absolute; left: 0; bottom: 4px; writing-mode: vertical-rl; transform: rotate(180deg); }
.lbl s { position: absolute; right: 0; bottom: 6px; width: 1px; height: 29px; background: repeating-linear-gradient(#b3611c 0 4px, #f0c488 4px 6px, #f5e9d8 6px 8px); }
.lbl u { position: absolute; left: 17px; bottom: 5px; writing-mode: vertical-rl; transform: rotate(180deg); text-decoration: none; line-height: 14px; font-size: 11px; }
.ft { height: 59px; display: flex; padding: 3px 0 0 2px; color: #8a8580; font-size: 12px; line-height: 16px; align-items: flex-start; }
.ft span { writing-mode: vertical-rl; transform: rotate(180deg); }
.ghost { position: absolute; left: 254px; top: 132px; font-size: 12px; line-height: 16px; color: rgba(110, 80, 40, .1); }
.legends { width: 154px; }
.lg { border: 1px solid #d4d4d4; background: #fafafa; margin-bottom: 6px; }
.lg.one { height: 58px; background: linear-gradient(#fafafa 30px, #fff 30px); }
.lg.two { height: 52px; background: #fafafa; }
.sel { margin: 3px 3px 0; height: 20px; border: 1px solid #bbb; border-radius: 1px; background: #fff; display: flex; align-items: center; padding-left: 3px; font-size: 12px; }
.sel b { margin-left: auto; border-left: 1px solid #ccc; width: 18px; height: 18px; display: flex; align-items: center; padding-left: 5px; }
.key { background: #f5e9d8; height: 21px; display: flex; align-items: center; padding-left: 3px; gap: 5px; color: #555; }
.key i { width: 14px; height: 14px; background: #f48f2d; }
.guide { width: 320px; margin-left: 6px; border: solid #d4d4d4; border-width: 1px 0 0 1px; background: #fff; display: flex; flex-direction: column; flex: none; }
.gh { height: 26px; border-bottom: 1px solid #d4d4d4; background: #fafafa; display: flex; align-items: center; justify-content: space-between; padding: 0 7px 0 18px; font-weight: 700; color: #000; }
.gh svg { margin-top: -1px; }
.gwrap { display: flex; height: 566px; overflow: hidden; }
.gbody { width: 302px; }
.g1 { height: 47px; border-bottom: 1px solid #ebebeb; display: flex; align-items: center; padding-left: 17px; gap: 9px; font-size: 15px; font-weight: 500; color: #555; }
.gs { height: 45px; display: flex; align-items: center; justify-content: space-between; padding: 0 15px 0 16px; font-size: 14.500px; font-weight: 500; color: #4f4f4f; }
.gs svg { margin-top: -2px; }
.gs.line { border-top: 1px solid #ebebeb; padding-top: 1px; }
.gdet { height: 144px; padding: 7px 16px 0; color: #555; }
.ta { position: relative; height: 38px; border: 1px solid #b8b8b8; border-radius: 1px; width: 270px; line-height: 14px; padding: 4px; margin: 1px 0 13px; color: #757575; font-size: 12.500px; }
.ta svg { position: absolute; right: 1px; bottom: 1px; }
.add { display: flex; align-items: center; gap: 10px; padding-left: 1px; margin-top: 5px; color: #777; }
.add svg { margin-top: -1px; }
.gdata { height: 156px; padding-top: 1px; }
.ds { display: flex; align-items: center; padding-left: 22px; gap: 12px; font-size: 15px; font-weight: 300; height: 36px; margin-bottom: 15px; color: #444; }
.gf { display: flex; height: 20px; align-items: center; padding-left: 45px; color: #666; font-size: 12.500px; }
.gf b { width: 25px; color: #4996b2; font-weight: 500; font-size: 9.500px; }
.gf b svg { margin-left: 2px; }
.sb { width: 17px; background: #f0f0f0; display: flex; flex-direction: column; align-items: center; padding: 7px 0 8px; }
.sb i { border: 4px solid transparent; border-top: 0; border-bottom: 4px solid #a0a0a0; width: 0; height: 0; }
.sb .dn { border-bottom: 0; border-top: 4px solid #505050; margin-top: auto; }
.thumb { width: 13px; height: 347px; background: #c1c1c1; margin-top: 6px; flex: none; }
.sheets { height: 31px; flex: none; background: #e6e6e6; border: solid #ccc; border-width: 1px 0; display: flex; }
.slist { width: 1270px; display: flex; overflow: hidden; }
.sh { border-right: 1px solid #c8c8c8; flex: none; display: flex; align-items: center; padding-left: 6px; gap: 4px; color: #666; font-size: 12.500px; }
.sh.ic { padding-left: 7px; }
.sh:first-child { padding-left: 9px; gap: 5px; }
.sh svg { margin-top: -1px; }
.sh.on { background: #fafafa; font-weight: 700; color: #555; padding-bottom: 2px; padding-left: 6px; }
.nb { width: 32px; border-left: 1px solid #c8c8c8; display: flex; align-items: center; justify-content: center; }
.status { height: 20px; flex: none; background: #ebebeb; display: flex; align-items: center; padding-left: 3px; gap: 18px; color: #222; font-size: 12px; }
.snav { margin-left: auto; display: flex; align-items: center; padding-right: 6px; }
.task { height: 40px; flex: none; background: linear-gradient(90deg, #02100f, #0b1214 50%, #1b1d1e); display: flex; }
.tk { width: 48px; height: 40px; display: flex; align-items: center; justify-content: center; flex: none; }
.tk.view { margin-right: 3px; }
.tk.tw { width: 49px; }
.act { background: #3a474c; border-bottom: 3px solid #f5a6be; }
.tray { margin-left: auto; display: flex; align-items: center; color: #fff; padding-right: 25px; }
.clock { display: flex; flex-direction: column; align-items: center; font: 12px/18px "Open Sans", sans-serif; margin: -2px 17px 0 9px; width: 60px; }
.tray > svg:nth-child(2) { margin: 0 11px 0 22px; }
.tray > svg:nth-child(4) { margin: 0 8px 0 7px; }
.snav > i { width: 1px; height: 19px; background: #d0d0d0; margin-right: 15px; }
.snav > svg { margin-right: 10px; }
.snav > svg:nth-child(9) { margin-right: 7px; }
.snav > em { width: 1px; height: 19px; background: #ccc; margin-right: 8px; }
.snav > svg:nth-child(11), .snav > svg:nth-child(12) { margin-right: 9px; }
.snav > svg:last-child { margin-right: 0; }
</style>
